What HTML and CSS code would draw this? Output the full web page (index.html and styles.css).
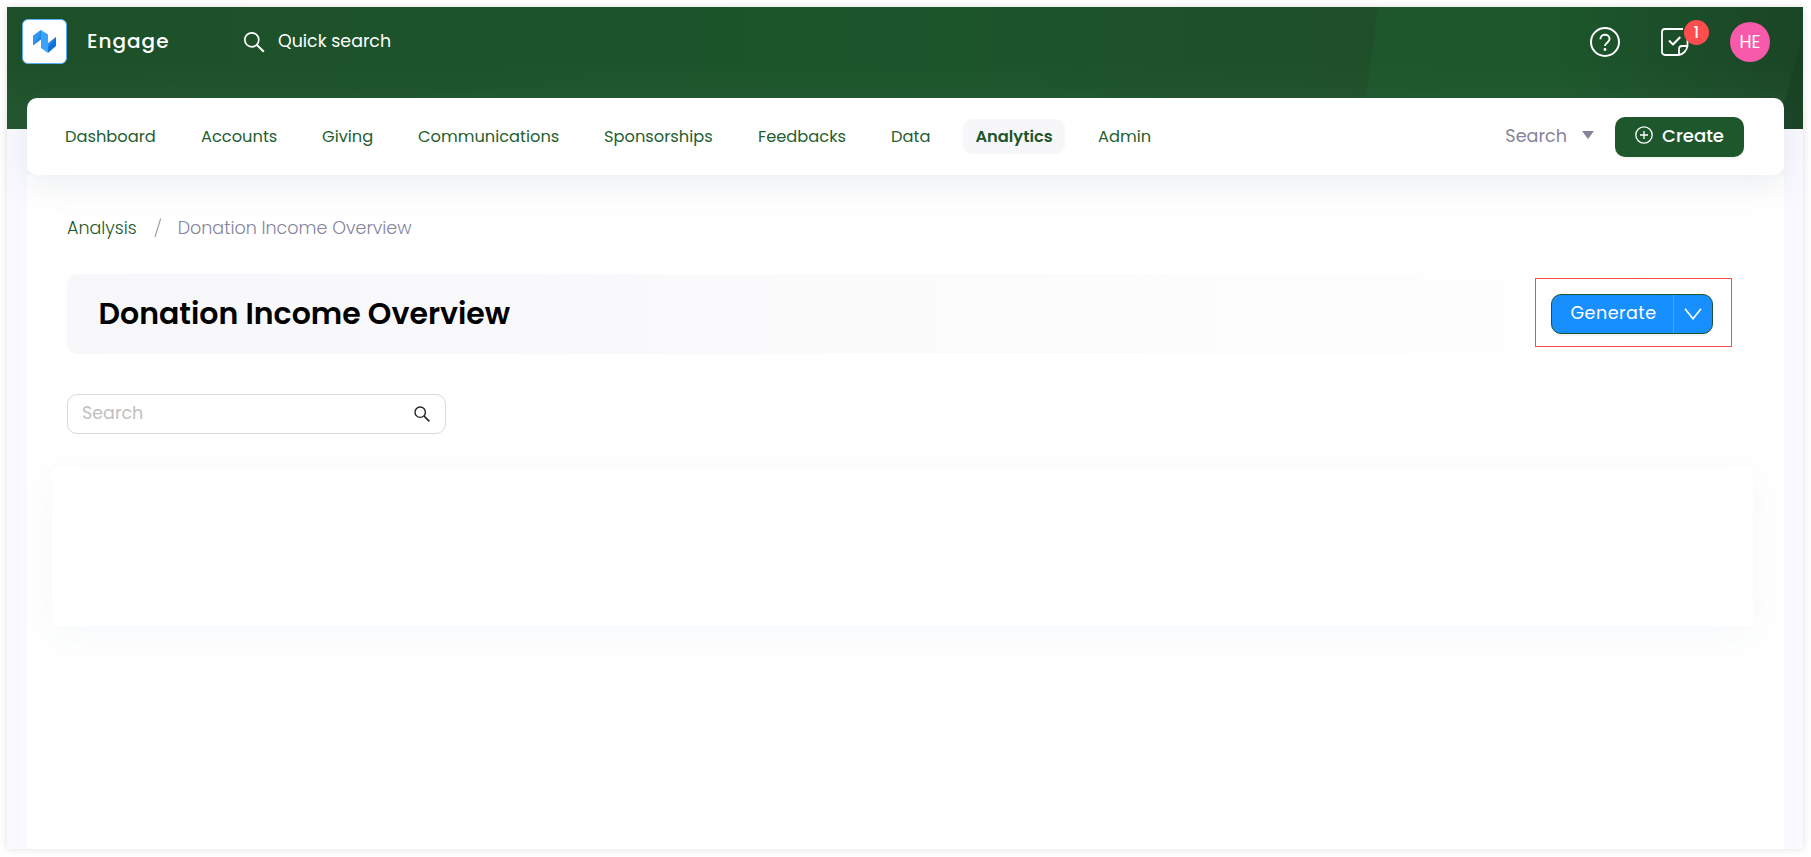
FILE: index.html
```html
<!DOCTYPE html>
<html lang="en">
<head>
<meta charset="utf-8">
<title>Donation Income Overview</title>
<link rel="stylesheet" href="styles.css">
</head>
<body>
<div class="app">
  <header class="topbar">
    <svg class="topbar-art" viewBox="0 0 1796 122" preserveAspectRatio="none">
      <defs>
        <linearGradient id="base" x1="0" x2="1" y1="0" y2="0"><stop offset="0" stop-color="#1d5029"/><stop offset=".5" stop-color="#1c552b"/><stop offset=".75" stop-color="#1e4f29"/><stop offset="1" stop-color="#1e4f29"/></linearGradient>
        <linearGradient id="facet" x1="0" x2="1" y1="0" y2="0"><stop offset="0" stop-color="#1e572c"/><stop offset=".45" stop-color="#1d562b"/><stop offset=".8" stop-color="#1b4b28"/><stop offset="1" stop-color="#1a4526"/></linearGradient>
        <linearGradient id="glow" x1="0" x2="0" y1="0" y2="1"><stop offset=".45" stop-color="#3a7045" stop-opacity="0"/><stop offset=".8" stop-color="#3a7045" stop-opacity=".2"/></linearGradient>
      </defs>
      <rect width="1796" height="122" fill="url(#base)"/>
      <path d="M1371 0H1796V122H1355Z" fill="url(#facet)"/>
      <rect width="1796" height="122" fill="url(#glow)"/>
      <path d="M1796 30V122H1769Z" fill="#163c22" opacity=".5"/>
    </svg>
    <div class="brand">
      <div class="brand-logo">
        <svg width="23" height="23" viewBox="0 0 23 23"><path d="M0 6 8 0v9.5L0 15.5Z" fill="#1f86e4"/><path d="M8 0l7 4.5V23L8 18Z" fill="#3ba3fb"/><path d="M15 13.5 23 7v9l-8 7Z" fill="#0f74d6"/><path d="M0 6v9.5L6 6.5 8 0Z" fill="#3297f2"/><path d="M23 7 15 13.5V17Z" fill="#2b8ff0"/></svg>
      </div>
      <span class="brand-name">Engage</span>
    </div>
    <div class="quick">
      <svg width="22" height="22" viewBox="0 0 22 22" fill="none" stroke="#fff" stroke-width="1.7"><circle cx="8.8" cy="8.8" r="7"/><path d="M13.7 13.7 20.8 20.8" stroke-width="2"/></svg>
      <span class="quick-label">Quick search</span>
    </div>
    <div class="tools">
      <svg width="30" height="30" viewBox="0 0 30 30" fill="none" stroke="#fff" stroke-width="2"><circle cx="15" cy="15" r="14"/><path d="M10.4 12.2C10.4 9.5 12.5 7.8 15 7.8s4.600 1.700 4.600 4.300c0 3.200-4.600 3.500-4.600 7" stroke-width="1.9"/><circle cx="15" cy="22.5" r="1.4" fill="#fff" stroke="none"/></svg>
      <div class="tasks">
        <svg width="28" height="28" viewBox="0 0 28 28" fill="none" stroke="#fff" stroke-width="1.8" stroke-linejoin="round"><path d="M26.500 10v8c-.6 4.500-4.500 8.500-9 9H4a3 3 0 0 1-3-3V4a3 3 0 0 1 3-3h18"/><path d="M18 27v-6a3 3 0 0 1 3-3h5.500"/><path d="m8 12.500 4 4L19.300 9" stroke-width="2"/></svg>
        <span class="badge">1</span>
      </div>
      <span class="avatar">HE</span>
    </div>
  </header>

  <nav class="navbar">
    <a class="nav-item n1">Dashboard</a>
    <a class="nav-item n2">Accounts</a>
    <a class="nav-item n3">Giving</a>
    <a class="nav-item n4">Communications</a>
    <a class="nav-item n5">Sponsorships</a>
    <a class="nav-item n6">Feedbacks</a>
    <a class="nav-item n7">Data</a>
    <a class="nav-item active">Analytics</a>
    <a class="nav-item n9">Admin</a>
    <div class="nav-actions">
      <span class="nav-search">Search</span>
      <span class="caret"></span>
      <button class="create">
        <svg width="18" height="18" viewBox="0 0 18 18" fill="none" stroke="#fff" stroke-width="1.3"><circle cx="9" cy="9" r="8.2"/><path d="M9 5v8M5 9h8"/></svg>
        <span>Create</span>
      </button>
    </div>
  </nav>

  <main class="page">
    <div class="crumbs"><a class="crumb-link">Analysis</a><svg class="slash" width="8" height="20" viewBox="0 0 8 20"><path d="M6.7.5 1 19" stroke="#9a9aa8" stroke-width="1.1"/></svg><span class="crumb-current">Donation Income Overview</span></div>
    <section class="title-row">
      <h1 class="title">Donation Income Overview</h1>
      <div class="highlight">
        <div class="split">
          <span class="split-main"><span>Generate</span></span>
          <span class="split-more"><svg width="18" height="12" viewBox="0 0 18 12" fill="none" stroke="#fff" stroke-width="1.6"><path d="M1 .8 9 10.8 17 .8"/></svg></span>
        </div>
      </div>
    </section>
    <div class="search-box">
      <span class="placeholder">Search</span>
      <svg width="16" height="16" viewBox="0 0 16 16" fill="none" stroke="#222" stroke-width="1.4"><circle cx="6.2" cy="6.2" r="5.2"/><path d="m10 10 5.3 5.3" stroke-width="1.7"/></svg>
    </div>
    <section class="results"></section>
  </main>
</div>
</body>
</html>
```
FILE: styles.css
```css
* { box-sizing: border-box; }
body {
  margin: 0;
  padding: 7px 8px 8px 7px;
  height: 857px;
  background: #fff;
  font-family: Poppins, Inter, sans-serif;
  overflow: hidden;
}
.app {
  display: flex;
  flex-direction: column;
  width: 1796px;
  height: 842px;
  background: #f9f9ff;
  box-shadow: 0 0 8px rgba(0, 0, 0, .12);
}
.topbar {
  position: relative;
  flex: none;
  display: flex;
  height: 122px;
  padding: 12px 33px 0 15px;
  color: #fff;
}
.topbar-art { position: absolute; inset: 0; width: 100%; height: 100%; }
.brand { position: relative; display: flex; align-items: center; height: 45px; width: 221px; gap: 20px; }
.brand-logo {
  display: flex; align-items: center; justify-content: center;
  width: 45px; height: 45px;
  background: #fff; border: 1px solid #5aaef8; border-radius: 6px;
}
.brand-name { font-size: 20px; font-weight: 500; letter-spacing: 1px; line-height: 30px; margin-top: -1px; }
.quick { position: relative; display: flex; align-items: center; height: 45px; gap: 13px; }
.quick-label { font-size: 17.4px; line-height: 26px; margin-top: -1px; }
.tools { position: relative; display: flex; align-items: center; height: 45px; margin-left: auto; }
.tasks { position: relative; height: 28px; margin: 0 41px 0 41px; }
.badge {
  position: absolute; left: 23px; top: -8px;
  width: 25px; height: 25px; border-radius: 50%;
  background: #ff4d4f; font-size: 15px; font-weight: 500; line-height: 26px; text-align: center;
}
.avatar {
  width: 40px; height: 40px; border-radius: 50%;
  background: #f759ab; font-size: 17.5px; line-height: 41px; text-align: center;
}
.navbar {
  position: relative; z-index: 1; flex: none;
  display: flex; align-items: center;
  height: 77px; margin: -31px 19px 0 20px; padding: 0 40px 0 38px;
  background: #fff; border-radius: 10px;
  box-shadow: 0 11px 34px rgba(70, 85, 110, .1);
}
.nav-item { flex: none; color: #25602f; font-size: 16.25px; line-height: 35px; white-space: nowrap; }
.n1 { width: 136px; }
.n2 { width: 121px; }
.n3 { width: 96px; }
.n4 { width: 186px; }
.n5 { width: 154px; }
.n6 { width: 133px; }
.n7 { width: 72px; }
.nav-item.active { width: 102px; margin-right: 33px; text-align: center; font-weight: 600; color: #1c552b; background: #f7f7fa; border-radius: 9px; }
.nav-actions { display: flex; align-items: center; margin-left: auto; }
.nav-search { color: #84849b; font-size: 17.6px; margin-top: -1px; }
.caret { margin: -3px 21px 0 15px; border: 6.5px solid transparent; border-top: 8px solid #84849b; border-bottom: 0; }
.create {
  display: flex; align-items: center; gap: 9px;
  width: 129px; height: 40px; padding: 0 0 0 20px;
  border: 0; border-radius: 10px; background: #1e572c; color: #fff;
  font: 500 18px/38px Poppins, Inter, sans-serif;
  box-shadow: 0 2px 2px rgba(0, 0, 0, .05);
}
.create svg { margin-top: -4px; }
.create span { margin-top: -1px; }
.page {
  flex: 1;
  margin: 0 19px 0 20px; padding: 40px 31px 0 25px;
  background: #fff;
}
.crumbs { display: flex; align-items: center; height: 26px; margin-left: 15px; font-size: 17.5px; font-weight: 300; }
.crumb-link { color: #1f572c; }
.slash { margin: 0 16px 0 17px; }
.crumb-current { color: #84849b; }
.title-row {
  display: flex; align-items: center; justify-content: space-between;
  width: 1665px; height: 80px; margin: 33px 0 0 15px; padding-left: 31.5px;
  border-radius: 10px;
  background: linear-gradient(90deg, #f7f7fa, #fff);
}
.title { margin: -1px 0 0; font-size: 30px; font-weight: 600; line-height: 40px; color: #000; white-space: nowrap; }
.highlight { width: 197px; height: 69px; margin-top: -3px; padding: 15px; border: 1px solid #f54c4c; }
.split {
  display: flex; width: 162px; height: 40px;
  border: 1px solid #1c552b; border-radius: 10px; background: #188fff; color: #fff;
  box-shadow: 0 2px 1px rgba(0, 0, 0, .05);
}
.split-main { width: 122px; padding-left: 18.5px; border-right: 1px solid #46a6ff; font-size: 17.5px; letter-spacing: .5px; line-height: 37px; }
.split-more { display: flex; flex: 1; align-items: center; justify-content: center; }
.search-box {
  display: flex; align-items: center; justify-content: space-between;
  width: 379px; height: 40px; margin: 40px 0 0 15px; padding: 0 15px 0 14px;
  border: 1px solid #d9d9d9; border-radius: 10px;
  color: #bfbfbf; font-size: 17.5px;
}
.placeholder { margin-top: -2px; }
.results { height: 158px; margin-top: 34px; background: #fff; box-shadow: 0 8px 38px rgba(60, 90, 130, .05); }
```
